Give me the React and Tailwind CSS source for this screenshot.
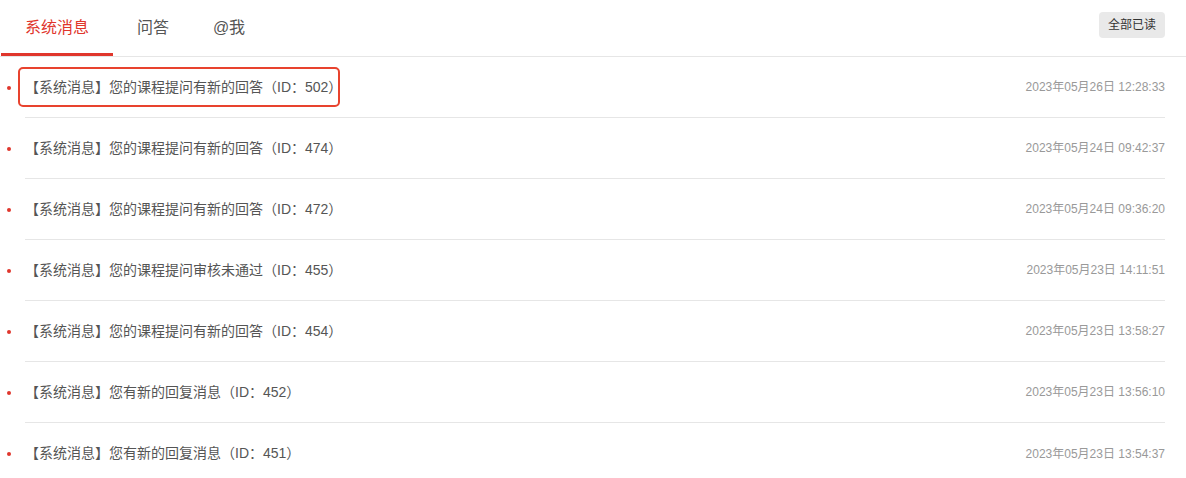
import { useState } from "react";

const tabs = ["系统消息", "问答", "@我"];

const messages = [
  { id: 502, text: "【系统消息】您的课程提问有新的回答（ID：502）", time: "2023年05月26日 12:28:33" },
  { id: 474, text: "【系统消息】您的课程提问有新的回答（ID：474）", time: "2023年05月24日 09:42:37" },
  { id: 472, text: "【系统消息】您的课程提问有新的回答（ID：472）", time: "2023年05月24日 09:36:20" },
  { id: 455, text: "【系统消息】您的课程提问审核未通过（ID：455）", time: "2023年05月23日 14:11:51" },
  { id: 454, text: "【系统消息】您的课程提问有新的回答（ID：454）", time: "2023年05月23日 13:58:27" },
  { id: 452, text: "【系统消息】您有新的回复消息（ID：452）", time: "2023年05月23日 13:56:10" },
  { id: 451, text: "【系统消息】您有新的回复消息（ID：451）", time: "2023年05月23日 13:54:37" },
];

const App = () => {

  const [active, setActive] = useState(0);

  return (
    <div
      className="w-[1186px] h-[478px] bg-white overflow-hidden"
      style={{ fontFamily: '"Liberation Sans", "Noto Sans CJK SC", sans-serif' }}
    >

      <div className="flex items-center justify-between h-[57px] border-b border-[#e6e6e6] pr-[21px]">

        <div className="flex h-full">
          {
            tabs.map((tab, i) => (
              <button
                key={tab}
                onClick={() => setActive(i)}
                className={
                  i === active
                    ? "h-full w-[112px] ml-px text-[16px] text-[#e0362c] border-b-[3px] border-[#e0362c] pt-[3px]"
                    : i === 1
                      ? "h-full w-[80px] text-[16px] text-[#555] border-b-[3px] border-transparent pt-[3px]"
                      : "h-full w-[72px] text-[16px] text-[#555] border-b-[3px] border-transparent pt-[3px]"
                }
              >
                {tab}
              </button>
            ))
          }
        </div>

        <button className="h-[26px] px-[9px] rounded-[4px] bg-[#e9e9e9] text-[12px] text-[#333] mt-[-6px]">
          全部已读
        </button>

      </div>

      <div className="pl-[25px] pr-[21px]">
        {
          messages.map((m, i) => (
            <div
              key={m.id}
              className={
                i === messages.length - 1
                  ? "relative flex items-center justify-between h-[61px]"
                  : "relative flex items-center justify-between h-[61px] border-b border-[#e6e6e6]"
              }
            >
              <span className="absolute left-[-18px] top-[29px] w-[4px] h-[4px] rounded-full bg-[#e0362c]" />

              <div className="relative text-[14px] text-[#555]">
                {m.text}
                {
                  i === 0 && (
                    <span className="absolute left-[-7px] w-[322px] top-[-10px] bottom-[-9px] border-[2.5px] border-[#e8432e] rounded-[5px]" />
                  )
                }
              </div>

              <div className="text-[12px] text-[#999]">
                {m.time}
              </div>
            </div>
          ))
        }
      </div>

    </div>
  );
};

export default App;
